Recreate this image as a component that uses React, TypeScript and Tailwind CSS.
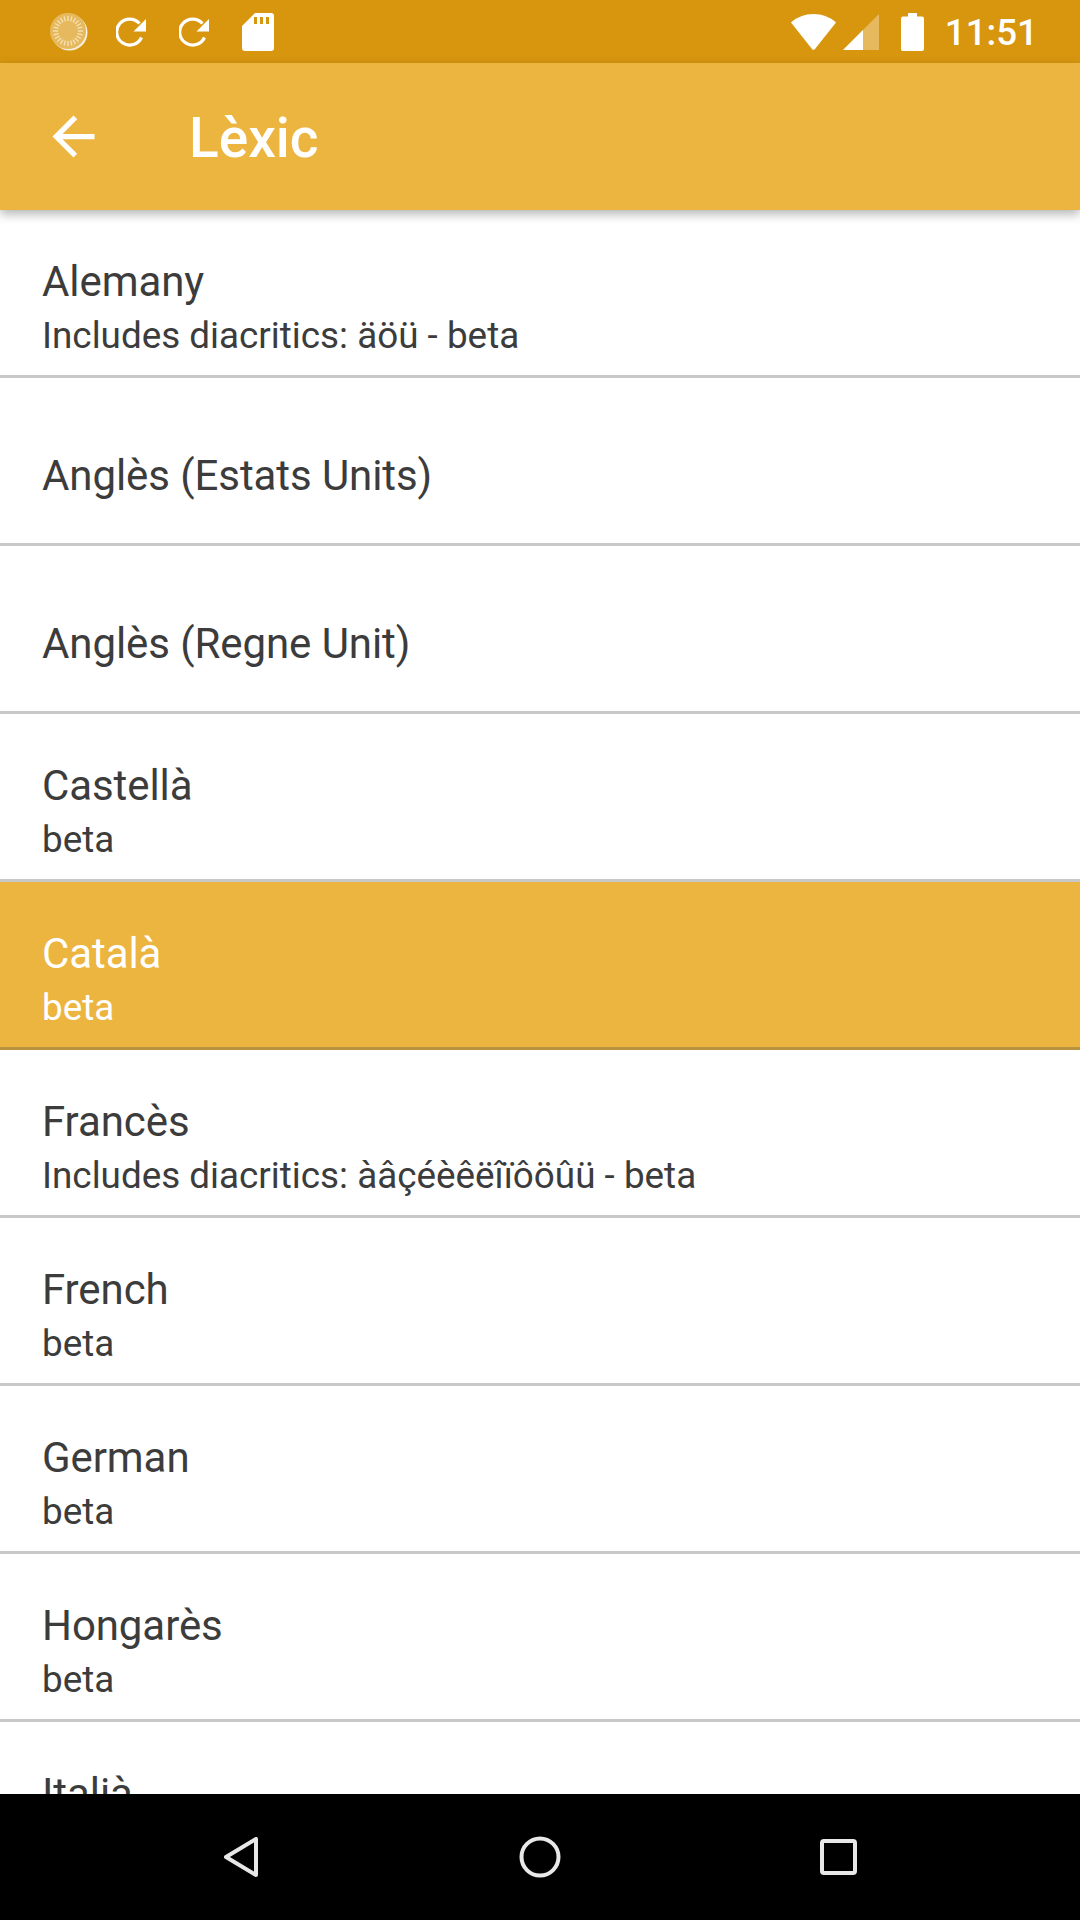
const rows = [
  { title: "Alemany", sub: "Includes diacritics: äöü - beta" },
  { title: "Anglès (Estats Units)" },
  { title: "Anglès (Regne Unit)" },
  { title: "Castellà", sub: "beta" },
  { title: "Català", sub: "beta", selected: true },
  { title: "Francès", sub: "Includes diacritics: àâçéèêëîïôöûü - beta" },
  { title: "French", sub: "beta" },
  { title: "German", sub: "beta" },
  { title: "Hongarès", sub: "beta" },
  // last row runs under the nav bar, its second line is never seen
  { title: "Italià", sub: "" },
];

function SyncIcon() {
  return (
    <svg width="32" height="32" viewBox="0 0 32 32" fill="none" aria-hidden="true">
      <path d="M25.5 21.5A13 13 0 1 1 23.5 7.5" stroke="white" strokeWidth="3.2" />
      <path d="M30 3v12.5H17.5z" fill="white" />
    </svg>
  );
}

function SunIcon() {
  const ticks = Array.from({ length: 24 }, (_, i) => i * 15);
  return (
    <svg width="38" height="38" viewBox="0 0 38 38" aria-hidden="true">
      <circle cx="19.5" cy="19.5" r="18" fill="#fff" opacity="0.85" />
      <circle cx="18" cy="18" r="18" fill="#e6b95e" />
      {ticks.map((deg) => (
        <line key={deg} x1="18" y1="3" x2="18" y2="8" stroke="#f6e3b8" strokeWidth="1.3" transform={`rotate(${deg} 18 18)`} />
      ))}
    </svg>
  );
}

function SdIcon() {
  return (
    <svg width="32" height="38" viewBox="0 0 32 38" aria-hidden="true">
      <path
        fillRule="evenodd"
        d="M13 0h16a3 3 0 0 1 3 3v32a3 3 0 0 1-3 3H3a3 3 0 0 1-3-3V13zM12 4v7h3V4zM18 4v7h3V4zM24 4v7h3V4z"
        fill="white"
      />
    </svg>
  );
}

function WifiIcon() {
  return (
    <svg width="46" height="38" viewBox="0 0 46 38" aria-hidden="true">
      <path d="M0 9.5C6 4 14 1 22.500 1S39 4 45 9.500L24 36a2 2 0 0 1-3 0z" fill="white" />
    </svg>
  );
}

function SignalIcon() {
  return (
    <svg width="36" height="36" viewBox="0 0 36 36" aria-hidden="true">
      <path d="M36 0v36H0z" fill="#e6b95e" />
      <path d="M20 16v20H0z" fill="white" />
    </svg>
  );
}

function BatteryIcon() {
  return (
    <svg width="23" height="38" viewBox="0 0 23 38" aria-hidden="true">
      <path d="M7 0h9v3.500h5a2 2 0 0 1 2 2V36a2 2 0 0 1-2 2H2a2 2 0 0 1-2-2V5.500a2 2 0 0 1 2-2h5z" fill="white" />
    </svg>
  );
}

export default function App() {
  return (
    <div className="flex h-[1920px] w-[1080px] flex-col overflow-hidden bg-white font-['Roboto',sans-serif]">
      <div className="flex h-[63px] shrink-0 items-center bg-[#d7960e] pl-[50px] pr-[42px]">
        <SunIcon />
        <div className="ml-[28px] flex items-center gap-[31px]">
          <SyncIcon />
          <SyncIcon />
        </div>
        <div className="ml-[31px]">
          <SdIcon />
        </div>
        <div className="ml-auto flex items-center">
          <WifiIcon />
          <div className="ml-[6px]">
            <SignalIcon />
          </div>
          <div className="ml-[22px]">
            <BatteryIcon />
          </div>
          <span className="ml-[21px] pt-[4px] text-[36.75px] font-medium leading-none text-white">11:51</span>
        </div>
      </div>

      <div className="z-10 flex h-[147px] shrink-0 items-center bg-[#ecb540] pl-[42px] shadow-[0_4px_10px_rgba(0,0,0,0.3)]">
        <svg width="63" height="63" viewBox="0 0 24 24" aria-hidden="true">
          <path d="M20 11H7.830l5.590-5.590L12 4l-8 8 8 8 1.410-1.410L7.830 13H20v-2z" fill="white" />
        </svg>
        <h1 className="ml-[84px] pt-[3px] text-[55px] font-medium leading-none text-white">Lèxic</h1>
      </div>

      <ul className="min-h-0 flex-1 overflow-hidden">
        {rows.map((row) => (
          <li
            key={row.title}
            className={
              row.selected
                ? "flex h-[168px] flex-col justify-center border-b-[3px] border-[#b8923e] bg-[#ecb540] px-[42px] pt-[31px] text-white"
                : "flex h-[168px] flex-col justify-center border-b-[3px] border-[#c8c8c8] px-[42px] pt-[31px] text-[#3c3c3c]"
            }
          >
            <div className="text-[42px] leading-[54px] tracking-[-0.08px]">{row.title}</div>
            {row.sub !== undefined && <div className="h-[52px] text-[36.85px] leading-[53px]">{row.sub}</div>}
          </li>
        ))}
      </ul>

      <div className="flex h-[126px] shrink-0 items-center justify-center bg-black">
        <div className="flex items-center gap-[260px]">
          <svg width="34" height="40" viewBox="0 0 34 40" fill="none" aria-hidden="true">
            <path d="M32 2v36L2 20z" stroke="#e8e8e8" strokeWidth="4" strokeLinejoin="round" />
          </svg>
          <svg className="ml-[1px] -mr-[1px]" width="42" height="42" viewBox="0 0 42 42" fill="none" aria-hidden="true">
            <circle cx="21" cy="21" r="18.500" stroke="#e8e8e8" strokeWidth="4" />
          </svg>
          <svg width="37" height="36" viewBox="0 0 37 36" fill="none" aria-hidden="true">
            <rect x="2" y="2" width="33" height="32" rx="2" stroke="#e8e8e8" strokeWidth="4" />
          </svg>
        </div>
      </div>
    </div>
  );
}
